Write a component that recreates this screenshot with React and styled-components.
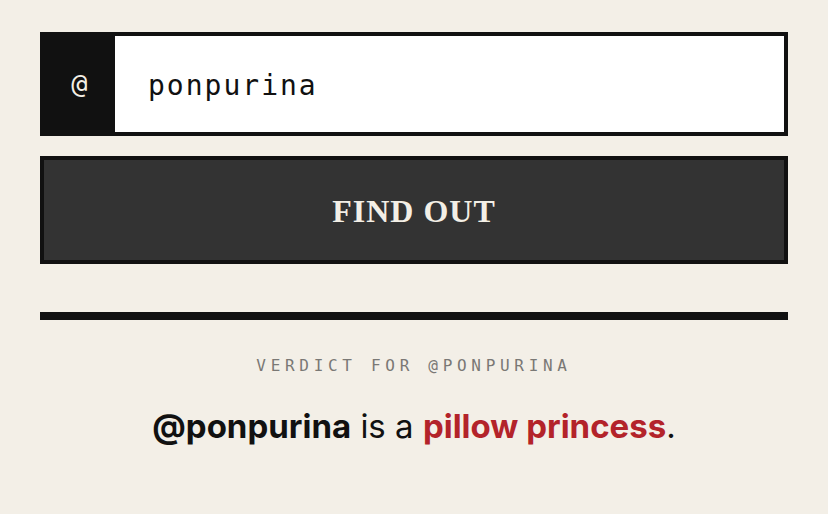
import styled, { createGlobalStyle } from "styled-components";

const GlobalStyle = createGlobalStyle`
  html, body {
    margin: 0;
    padding: 0;
    background: #f3efe7;
  }
  * {
    box-sizing: border-box;
  }
`;

const Page = styled.div`
  width: 828px;
  min-height: 514px;
  padding: 32px 40px 0;
  display: flex;
  flex-direction: column;
`;

const InputRow = styled.div`
  display: flex;
  height: 104px;
  border: 4px solid #111;
  background: #fff;
`;

const Prefix = styled.span`
  width: 71px;
  flex-shrink: 0;
  background: #111;
  color: #f3efe6;
  display: flex;
  align-items: center;
  justify-content: center;
  padding-bottom: 2px;
  font-family: "DejaVu Sans Mono", "Liberation Mono", monospace;
  font-size: 27px;
`;

const Handle = styled.input`
  flex: 1;
  border: none;
  outline: none;
  background: #fff;
  padding: 2px 0 0 33px;
  font-family: "DejaVu Sans Mono", "Liberation Mono", monospace;
  font-size: 28px;
  letter-spacing: 2px;
  color: #111;
`;

const FindButton = styled.button`
  margin-top: 20px;
  height: 108px;
  padding-top: 4px;
  border: 4px solid #111;
  background: #333;
  color: #f3efe6;
  font-family: "Liberation Serif", "Times New Roman", serif;
  font-weight: 700;
  font-size: 32px;
  letter-spacing: 1px;
  cursor: pointer;
`;

const Rule = styled.hr`
  margin: 48px 0 0;
  border: none;
  height: 8px;
  background: #111;
`;

const Verdict = styled.section`
  display: flex;
  flex-direction: column;
  align-items: center;
  padding-top: 36px;
`;

const Label = styled.div`
  font-family: "DejaVu Sans Mono", "Liberation Mono", monospace;
  font-size: 16px;
  letter-spacing: 4.7px;
  color: #7a7875;
  text-transform: uppercase;
`;

const Result = styled.p`
  margin: 31px 0 0;
  font-family: Inter, "Noto Sans", sans-serif;
  font-size: 33px;
  color: #111;
`;

const Em = styled.strong`
  font-weight: 700;
  color: ${(props) => (props.red ? "#b3232a" : "#111")};
`;

export default function App() {
  const user = "ponpurina";
  return (
    <>
      <GlobalStyle />
      <Page>
        <InputRow>
          <Prefix>@</Prefix>
          <Handle defaultValue={user} />
        </InputRow>
        <FindButton>FIND OUT</FindButton>
        <Rule />
        <Verdict>
          <Label>Verdict for @{user}</Label>
          <Result>
            <Em>@{user}</Em> is a <Em red>pillow princess</Em>.
          </Result>
        </Verdict>
      </Page>
    </>
  );
}
